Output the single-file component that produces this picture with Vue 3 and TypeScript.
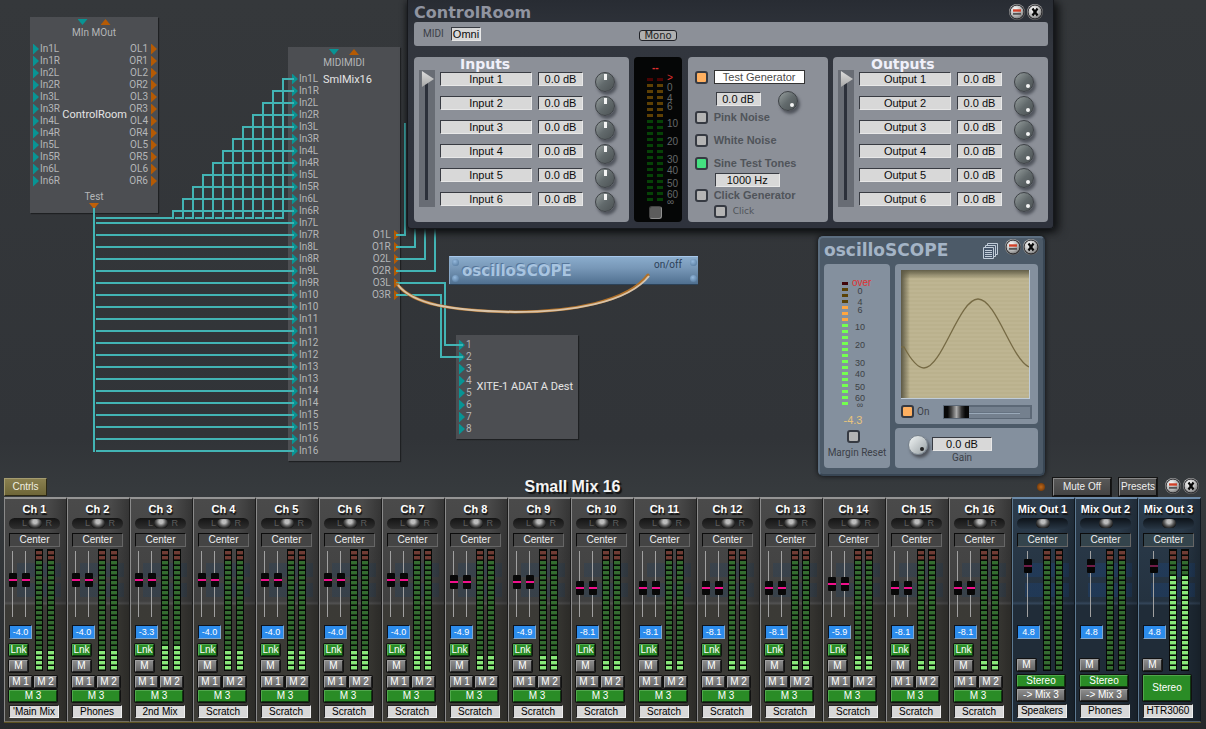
<script setup lang="ts">
import { ref } from 'vue'

interface Strip {
  name: string
  gain: string
  fader: number
  lit: number
  label: string
  kind: 'ch' | 'sub' | 'main'
  spread: boolean
}

const channels: Array<[string, number, number, string]> = [
  ['-4.0', 58, 4, "'Main Mix"], ['-4.0', 58, 4, 'Phones'], ['-3.3', 58, 5, '2nd Mix'], ['-4.0', 58, 4, 'Scratch'],
  ['-4.0', 58, 4, 'Scratch'], ['-4.0', 58, 4, 'Scratch'], ['-4.0', 58, 4, 'Scratch'], ['-4.9', 54, 3, 'Scratch'],
  ['-4.9', 54, 3, 'Scratch'], ['-8.1', 42, 2, 'Scratch'], ['-8.1', 42, 2, 'Scratch'], ['-8.1', 42, 2, 'Scratch'],
  ['-8.1', 42, 2, 'Scratch'], ['-5.9', 50, 3, 'Scratch'], ['-8.1', 42, 2, 'Scratch'], ['-8.1', 42, 2, 'Scratch'],
]

const strips = ref<Strip[]>([
  ...channels.map(([gain, fader, lit, label], i): Strip => ({
    name: `Ch ${i + 1}`, gain, fader, lit, label, kind: 'ch', spread: i < 4,
  })),
  { name: 'Mix Out 1', gain: '4.8', fader: 83, lit: 0, label: 'Speakers', kind: 'sub', spread: true },
  { name: 'Mix Out 2', gain: '4.8', fader: 83, lit: 0, label: 'Phones', kind: 'sub', spread: true },
  { name: 'Mix Out 3', gain: '4.8', fader: 83, lit: 19, label: 'HTR3060', kind: 'main', spread: true },
])

const CELLS = 24
const cellClass = (n: number, lit: number): string =>
  n <= 2 ? 'peak' : n > CELLS - lit ? 'lit' : 'dim'

const pair = (prefix: string, from: number, to: number): string[] => {
  const out: string[] = []
  for (let n = from; n <= to; n++) out.push(`${prefix}${n}L`, `${prefix}${n}R`)
  return out
}
const roomIns = pair('In', 1, 6)
const roomOuts = [1, 2, 3, 4, 5, 6].flatMap((n) => [`OL${n}`, `OR${n}`])
const mixIns = [...pair('In', 1, 9), ...[10, 11, 12, 13, 14, 15, 16].flatMap((n) => [`In${n}`, `In${n}`])]
const mixOuts = pair('O', 1, 3)
const adatIns = ['1', '2', '3', '4', '5', '6', '7', '8']

const fan = Array.from({ length: 12 }, (_, i) => {
  const x = 283 - i * 10
  const y = 79 + i * 12
  return `M294 ${y}H${x}V218H${x - 8}`
})
const straight = Array.from({ length: 20 }, (_, i) => `M96 ${223 + i * 12}H294`)
const wires = [
  'M94 208V452', 'M96 218H165', ...fan, ...straight,
  'M396 235H405V123', 'M396 247H415V225', 'M396 259H425V225', 'M396 271H435V225',
  'M396 283H445V345H463', 'M396 295H441V357H463',
]

const scale: Array<[string, number]> = [
  ['0', 13], ['4', 24], ['6', 32], ['10', 49], ['20', 67], ['30', 85], ['40', 96], ['50', 109], ['60', 120], ['∞', 127],
]
const roomLed = (n: number): string => (n === 0 ? '#4a0404' : n < 7 ? '#5e4004' : '#064206')
const scopeLed = (n: number): string =>
  n === 0 ? '#400408' : n < 4 ? '#5a4206' : n < 7 ? '#ffa640' : '#74ff50'

const inputs = ref([1, 2, 3, 4, 5, 6].map((n) => ({ name: `Input ${n}`, gain: '0.0 dB' })))
const outputs = ref([1, 2, 3, 4, 5, 6].map((n) => ({ name: `Output ${n}`, gain: '0.0 dB' })))
</script>

<template>
  <main class="desk">
    <section class="canvas" aria-label="Routing">
      <article class="node node-room">
        <header class="node-head">
          <span class="tris"><i class="tri down"></i><i class="tri up"></i></span>
          <span>MIn MOut</span>
        </header>
        <div class="node-body">
          <ul class="ports in"><li v-for="p in roomIns" :key="p">{{ p }}</li></ul>
          <h3 class="node-name">ControlRoom</h3>
          <ul class="ports out"><li v-for="p in roomOuts" :key="p">{{ p }}</li></ul>
        </div>
        <footer class="node-foot">Test<i class="tri down hot"></i></footer>
      </article>

      <article class="node node-mix">
        <header class="node-head">
          <span class="tris close"><i class="tri down"></i><i class="tri up"></i></span>
          <span>MIDIMIDI</span>
        </header>
        <div class="node-body">
          <ul class="ports in"><li v-for="(p, i) in mixIns" :key="i">{{ p }}</li></ul>
          <h3 class="node-name top">SmlMix16</h3>
          <ul class="ports out low"><li v-for="p in mixOuts" :key="p">{{ p }}</li></ul>
        </div>
      </article>

      <article class="node node-adat">
        <div class="node-body">
          <ul class="ports in"><li v-for="p in adatIns" :key="p">{{ p }}</li></ul>
          <h3 class="node-name">XITE-1 ADAT A Dest</h3>
        </div>
      </article>

      <article class="banner">
        <span class="screws"><i></i><i></i></span>
        <h3>oscilloSCOPE</h3>
        <span class="onoff">on/off</span>
        <span class="screws"><i></i><i></i></span>
      </article>

      <svg class="wires" aria-hidden="true">
        <path v-for="(d, i) in wires" :key="i" :d="d" class="wire" />
        <path class="cable-edge" d="M397 284C412 304 450 311 515 312C570 312 628 302 648 275" />
        <path class="cable-core" d="M398 285C413 304 450 311 515 312C570 312 628 303 649 276" />
      </svg>

      <section class="window room" aria-label="ControlRoom">
        <header class="titlebar">
          <h2>ControlRoom</h2>
          <span class="winbtns">
            <button type="button" class="round" aria-label="Minimize">
              <svg viewBox="0 0 16 16"><circle cx="8" cy="8" r="7" /><path d="M4 6.500h8" stroke="#d04028" stroke-width="2.400" /><path d="M4 9.800h8" stroke="#555" stroke-width="2" /></svg>
            </button>
            <button type="button" class="round" aria-label="Close">
              <svg viewBox="0 0 16 16"><circle cx="8" cy="8" r="7" /><path d="M5.500 4.500l5 7M10.500 4.500l-5 7" stroke="#080808" stroke-width="2.200" /></svg>
            </button>
          </span>
        </header>
        <div class="midibar">
          <label class="narrow" for="midi">MIDI</label>
          <input id="midi" class="field omni" value="Omni" />
          <button type="button" class="mono">Mono</button>
        </div>
        <div class="panels">
          <section class="panel io">
            <h3>Inputs</h3>
            <div class="io-row">
              <input class="scroller" type="range" min="0" max="100" value="0" aria-label="Scroll inputs" />
              <div class="io-list">
                <div v-for="(r, i) in inputs" :key="i" class="io-line">
                  <input v-model="r.name" class="field name" :aria-label="`Input ${i + 1} name`" />
                  <input v-model="r.gain" class="field db" :aria-label="`Input ${i + 1} gain`" />
                  <label class="knob up"><input type="range" :aria-label="`Input ${i + 1} trim`" /></label>
                </div>
              </div>
            </div>
          </section>

          <section class="panel meter">
            <svg class="meter-svg" viewBox="0 0 48 150" aria-label="Level meter">
              <text x="18" y="14" class="red big">--</text>
              <g v-for="n in 21" :key="n">
                <rect x="13" :y="21 + (n - 1) * 6" width="6" height="3" :fill="roomLed(n - 1)" />
                <rect x="23" :y="21 + (n - 1) * 6" width="6" height="3" :fill="roomLed(n - 1)" />
              </g>
              <text x="33" y="24" class="red">&gt;</text>
              <text v-for="[t, y] in scale" :key="t" x="33" :y="y + 21" class="scale dark">{{ t }}</text>
            </svg>
            <input class="box gray" type="checkbox" aria-label="Reset meter" />
          </section>

          <section class="panel test">
            <div class="trow">
              <input type="checkbox" class="box orange" checked aria-label="Enable test generator" />
              <input class="field white" value="Test Generator" aria-label="Generator name" />
            </div>
            <div class="trow level">
              <input class="field db" value="0.0 dB" aria-label="Generator level" />
              <label class="knob right"><input type="range" aria-label="Generator level knob" /></label>
            </div>
            <div class="trow"><input id="pink" type="checkbox" class="box" /><label for="pink">Pink Noise</label></div>
            <div class="trow g"><input id="white" type="checkbox" class="box" /><label for="white">White Noise</label></div>
            <div class="trow g"><input id="sine" type="checkbox" class="box green" checked /><label for="sine">Sine Test Tones</label></div>
            <input class="field hz" value="1000 Hz" aria-label="Frequency" />
            <div class="trow"><input id="clickgen" type="checkbox" class="box" /><label for="clickgen">Click Generator</label></div>
            <div class="trow click"><input id="click" type="checkbox" class="box" /><label for="click">Click</label></div>
          </section>

          <section class="panel io">
            <h3>Outputs</h3>
            <div class="io-row">
              <input class="scroller" type="range" min="0" max="100" value="0" aria-label="Scroll outputs" />
              <div class="io-list">
                <div v-for="(r, i) in outputs" :key="i" class="io-line">
                  <input v-model="r.name" class="field name" :aria-label="`Output ${i + 1} name`" />
                  <input v-model="r.gain" class="field db" :aria-label="`Output ${i + 1} gain`" />
                  <label class="knob right"><input type="range" :aria-label="`Output ${i + 1} trim`" /></label>
                </div>
              </div>
            </div>
          </section>
        </div>
      </section>

      <section class="window scope" aria-label="oscilloSCOPE">
        <header class="titlebar">
          <h2>oscilloSCOPE</h2>
          <button type="button" class="pages" aria-label="Presets">
            <svg viewBox="0 0 15 16" fill="#46566a" stroke="#c0ccd8"><path d="M4.500.5h10v11h-10z" /><path d="M2.500 2.500h10v11h-10z" /><path d="M.5 4.500h10v11h-10z" /><path d="M2 7.500h7M2 9.500h7M2 11.500h7M2 13.500h7" /></svg>
          </button>
          <span class="winbtns">
            <button type="button" class="round" aria-label="Minimize">
              <svg viewBox="0 0 16 16"><circle cx="8" cy="8" r="7" /><path d="M4 6.500h8" stroke="#d04028" stroke-width="2.400" /><path d="M4 9.800h8" stroke="#555" stroke-width="2" /></svg>
            </button>
            <button type="button" class="round" aria-label="Close">
              <svg viewBox="0 0 16 16"><circle cx="8" cy="8" r="7" /><path d="M5.500 4.500l5 7M10.500 4.500l-5 7" stroke="#080808" stroke-width="2.200" /></svg>
            </button>
          </span>
        </header>
        <div class="scope-body">
          <section class="spanel left">
            <svg class="scope-meter" viewBox="0 0 66 148" aria-label="Level meter">
              <rect v-for="n in 21" :key="n" x="18" :y="4 + (n - 1) * 6" width="6" height="3" :fill="scopeLed(n - 1)" />
              <text x="28" y="8" class="red over">over</text>
              <text v-for="[t, y] in scale" :key="t" x="36" :y="y + 3" text-anchor="middle" class="scale">{{ t }}</text>
              <text x="29" y="146" text-anchor="middle" class="peakval">-4.3</text>
            </svg>
            <input id="margin" type="checkbox" class="box" />
            <label for="margin" class="narrow">Margin Reset</label>
          </section>
          <div class="scope-right">
            <section class="spanel view">
              <svg class="screen" viewBox="0 0 128 128" aria-label="Waveform">
                <path d="M0 77h3C9 88 16 98 23 98C41 98 58 29 77 29C95 29 110 88 128 97" fill="none" stroke="#766a44" stroke-width="1.300" />
              </svg>
              <div class="onrow">
                <input id="on" type="checkbox" class="box orange" checked />
                <label for="on" class="narrow">On</label>
                <input class="hslide" type="range" min="0" max="100" value="0" aria-label="Time base" />
              </div>
            </section>
            <section class="spanel gain">
              <label class="knob light right"><input type="range" aria-label="Gain knob" /></label>
              <div class="gainval">
                <input id="gain" class="field" value="0.0 dB" />
                <label for="gain" class="narrow">Gain</label>
              </div>
            </section>
          </div>
        </div>
      </section>
    </section>

    <section class="mixer" aria-label="Small Mix 16">
      <header class="mixhead">
        <button type="button" class="cntrls">Cntrls</button>
        <h2>Small Mix 16</h2>
        <span class="tools">
          <i class="lamp"></i>
          <button type="button" class="dark mute">Mute Off</button>
          <button type="button" class="dark">Presets</button>
          <span class="winbtns">
            <button type="button" class="round" aria-label="Minimize">
              <svg viewBox="0 0 16 16"><circle cx="8" cy="8" r="7" /><path d="M4 6.500h8" stroke="#d04028" stroke-width="2.400" /><path d="M4 9.800h8" stroke="#555" stroke-width="2" /></svg>
            </button>
            <button type="button" class="round" aria-label="Close">
              <svg viewBox="0 0 16 16"><circle cx="8" cy="8" r="7" /><path d="M5.500 4.500l5 7M10.500 4.500l-5 7" stroke="#080808" stroke-width="2.200" /></svg>
            </button>
          </span>
        </span>
      </header>
      <div class="strips">
        <article v-for="s in strips" :key="s.name" class="strip" :class="[s.kind, { spread: s.spread }]">
          <h3>{{ s.name }}</h3>
          <div class="pan">
            <template v-if="s.kind === 'ch'"><span>L</span><span>R</span></template>
            <input type="range" value="50" :aria-label="`${s.name} pan`" />
          </div>
          <output class="center">Center</output>
          <div class="mid">
            <div class="leftcol">
              <div class="faders">
                <input v-model.number="s.fader" type="range" min="0" max="100" :aria-label="`${s.name} level`" />
                <input v-if="s.kind === 'ch'" v-model.number="s.fader" type="range" min="0" max="100" :aria-label="`${s.name} right level`" />
              </div>
              <input v-model="s.gain" class="gainbox" :aria-label="`${s.name} gain`" />
              <button v-if="s.kind === 'ch'" type="button" class="btn on lnk">Lnk</button>
              <button type="button" class="btn m">M</button>
            </div>
            <div class="bars">
              <div v-for="b in 2" :key="b" class="bar"><i v-for="n in CELLS" :key="n" :class="cellClass(n, s.lit)"></i></div>
            </div>
          </div>
          <div class="bus">
            <template v-if="s.kind === 'ch'">
              <div class="two"><button type="button" class="btn">M 1</button><button type="button" class="btn">M 2</button></div>
              <button type="button" class="btn on">M 3</button>
            </template>
            <template v-else>
              <button type="button" class="btn on stereo">Stereo</button>
              <button v-if="s.kind === 'sub'" type="button" class="btn">-&gt; Mix 3</button>
            </template>
          </div>
          <input v-model="s.label" class="label" :aria-label="`${s.name} label`" />
        </article>
      </div>
    </section>
  </main>
</template>

<style>
html,
body {
  margin: 0;
  background: #26292c;
}
</style>

<style scoped>
.desk,
.desk * {
  box-sizing: border-box;
}
.desk {
  min-height: 100vh;
  display: flex;
  flex-direction: column;
  overflow: hidden;
  background: linear-gradient(#35383b 0, #313438 60%, #363a3d 67%, #26282b 100%);
  font: 11px/14px "Liberation Sans", Arial, sans-serif;
  color: #ddd;
}
h2,
h3,
ul {
  margin: 0;
  padding: 0;
  list-style: none;
}
button,
input {
  margin: 0;
  padding: 0;
  border: 0;
  font: inherit;
  color: inherit;
  min-width: 0;
}
input[type="range"],
input[type="checkbox"] {
  appearance: none;
  background: none;
}
.canvas {
  position: relative;
  flex: 1 0 474px;
}

/* modules */
.node {
  position: absolute;
  background: #4c4e52;
  box-shadow: 1px 1px 1px #1e2022;
  font: 10px/12px Roboto, "Liberation Sans", sans-serif;
  color: #b4b6b8;
}
.node-room { left: 30px; top: 17px; width: 128px; height: 196px; }
.node-mix { left: 288px; top: 47px; width: 112px; height: 414px; }
.node-adat { left: 456px; top: 335px; width: 122px; height: 104px; padding-top: 4px; }
.node-head {
  display: flex;
  flex-direction: column;
  align-items: center;
  height: 26px;
  padding-top: 2px;
  gap: 2px;
}
.tris { display: flex; gap: 13px; }
.tris.close { gap: 10px; }
.tri { width: 10px; height: 6px; }
.tri.up { clip-path: polygon(50% 0, 100% 100%, 0 100%); background: #b45a04; }
.tri.down { clip-path: polygon(0 0, 100% 0, 50% 100%); background: #089494; }
.tri.hot { background: #c06008; }
.node-body { display: flex; }
.ports li { display: flex; align-items: center; height: 12px; }
.ports.in { padding-left: 3px; }
.ports.out { padding-right: 1px; }
.ports.in li::before,
.ports.out li::after {
  content: "";
  width: 6px;
  height: 11px;
  background: #089494;
  clip-path: polygon(0 0, 100% 50%, 0 100%);
}
.ports.in li::before { margin-right: 1px; }
.ports.out li { justify-content: flex-end; }
.ports.out li::after { background: #b45a04; margin-left: 3px; }
.ports.low { padding-top: 156px; }
.node-mix .ports.in { padding-left: 4px; }
.node-name {
  flex: 1;
  align-self: center;
  text-align: center;
  font: 11px/14px Roboto, "Liberation Sans", sans-serif;
  color: #e4e4e4;
  white-space: nowrap;
}
.node-name.top { align-self: flex-start; text-align: left; padding-left: 4px; }
.node-foot {
  display: flex;
  flex-direction: column;
  align-items: center;
  padding-top: 4px;
}
.wires {
  position: absolute;
  inset: 0;
  width: 100%;
  height: 100%;
  pointer-events: none;
}
.wire { fill: none; stroke: #42b4b4; stroke-width: 2; }
.cable-edge { fill: none; stroke: #b07028; stroke-width: 3; stroke-linecap: round; }
.cable-core { fill: none; stroke: #e4d8c8; stroke-width: 2; opacity: 0.8; }

.banner {
  position: absolute;
  left: 449px;
  top: 256px;
  width: 249px;
  height: 28px;
  display: flex;
  background: linear-gradient(#8aaccc, #7898b8 40%, #507090);
  border-top: 1px solid #a8c8ec;
  border-left: 1px solid #88a8c8;
  box-shadow: 0 1px 0 #2c4258;
}
.banner h3 {
  flex: 1;
  padding-left: 2px;
  font: 700 15px/28px "DejaVu Sans", sans-serif;
  color: #a8c4e0;
  text-shadow: -1px -1px 0 #56769a;
}
.onoff { padding-right: 6px; color: #2c4058; font: 10px/15px Roboto, "Liberation Sans", sans-serif; }
.screws { width: 10px; display: flex; flex-direction: column; justify-content: space-between; align-items: center; padding: 2px 0; }
.screws i { width: 7px; height: 7px; border-radius: 50%; background: radial-gradient(circle at 40% 35%, #94b8dc, #4c7094); }

/* windows */
.window { position: absolute; display: flex; flex-direction: column; }
.titlebar { display: flex; align-items: flex-start; }
.titlebar h2 { flex: 1; font: 700 16px/20px "DejaVu Sans", Verdana, sans-serif; color: #9094a0; }
.winbtns { display: flex; gap: 2px; }
.round {
  width: 16px;
  height: 16px;
  border-radius: 50%;
  background: radial-gradient(circle at 40% 35%, #f0f0f0 10%, #b4b4b4 45%, #5c5c5c 80%);
}
.round svg { display: block; fill: none; }
.round circle { stroke: #1c1c20; stroke-width: 1; }
.room {
  left: 407px;
  top: 0;
  width: 647px;
  padding: 3px 5px 6px 6px;
  background: linear-gradient(#282c33, #32363e 20%, #2e323c);
  border: 1px solid #16181c;
  border-top: 0;
  border-radius: 0 0 4px 4px;
  box-shadow: 0 2px 7px #0c0e10, 6px 3px 8px #1c1e20;
}
.room .titlebar { height: 19px; }
.room .titlebar .winbtns { padding: 1px 5px 0 0; }
.midibar {
  display: flex;
  align-items: center;
  height: 24px;
  padding: 0 9px 1px 9px;
  background: #8c9098;
  border-radius: 3px;
}
.narrow { font: 10px/14px Roboto, "Liberation Sans", sans-serif; color: #3c4048; white-space: nowrap; }
.midibar .narrow { width: 28px; }
.field {
  height: 14px;
  background: #d8d8d8;
  border: 1px solid #e8e8e8;
  border-top-color: #383b42;
  border-left-color: #383b42;
  text-align: center;
  font: 11px/12px "Liberation Sans", Arial, sans-serif;
  color: #0c0c0c;
}
.omni { width: 30px; }
.mono {
  margin: 3px 0 0 158px;
  width: 38px;
  height: 11px;
  background: #b0b0b0;
  border: 1px solid #202228;
  border-radius: 3px;
  font: 10px/9px "DejaVu Sans", sans-serif;
  color: #222;
}
.panels { display: grid; grid-template-columns: 215px 48px 140px 215px; justify-content: space-between; margin-top: 11px; }
.panel { height: 165px; background: #8c9098; border-radius: 4px; }
.io { padding: 0 5px; }
.io h3 { font: 700 14px/14px "DejaVu Sans", Verdana, sans-serif; color: #f0f0fa; padding-left: 41px; height: 13px; }
.test + .io h3 { padding-left: 33px; }
.io-row { display: flex; gap: 5px; }
.io-row .scroller {
  writing-mode: vertical-lr;
  width: 16px;
  height: 137px;
  background: linear-gradient(#2c303a, #2c303a) 6px 12px / 3px 118px no-repeat, #686c74;
}
.scroller::-webkit-slider-thumb {
  appearance: none;
  width: 14px;
  height: 18px;
  background: linear-gradient(#e0e0e0, #a4a4a4);
  clip-path: polygon(14% 6%, 100% 50%, 14% 94%);
}
.io-list { display: flex; flex-direction: column; gap: 10px; padding-top: 2px; }
.io-line { display: flex; height: 14px; }
.name { width: 92px; margin-right: 6px; }
.db { width: 45px; }
.io-line .knob { margin-left: 12px; }
.knob {
  position: relative;
  width: 20px;
  height: 20px;
  border-radius: 50%;
  background: linear-gradient(135deg, #8c9494 10%, #626a6c 50%, #4c5254);
  border: 1px solid #3e4246;
  box-shadow: 2px 3px 3px #50545c;
  flex: none;
}
.knob::after {
  content: "";
  position: absolute;
  left: 8px;
  top: 1px;
  width: 3px;
  height: 6px;
  background: #f4f4f4;
}
.knob.right::after { left: 11px; top: 11px; width: 4px; height: 4px; border-radius: 2px; }
.knob.light { background: linear-gradient(135deg, #f0f4f4, #98a0a4); border-color: #78828c; }
.knob.light::after { background: #222; }
.knob input { position: absolute; inset: 0; width: 100%; height: 100%; opacity: 0; }

.meter { background: #050606; display: flex; flex-direction: column; align-items: center; }
.meter-svg { width: 48px; height: 150px; flex: none; }
.red { fill: #e03030; font: 10px "Liberation Sans", sans-serif; }
.big { font-weight: 700; }
.scale { font: 9px "Liberation Sans", sans-serif; fill: #3c4044; }
.scale.dark { fill: #64686a; }

.box {
  flex: none;
  width: 13px;
  height: 13px;
  border: 2px solid #363a42;
  border-radius: 3px;
}
input[type="checkbox"].box { background: #b4b4b4; }
input[type="checkbox"].orange { background: #ffb060; }
input[type="checkbox"].green { background: #44e080; }
input[type="checkbox"].gray { background: #5c5c5c; border: 1px solid #888; border-color: #444 #909090 #909090 #444; align-self: flex-start; margin-left: 15px; margin-top: -1px; }
.test { padding: 13px 6px 0 7px; display: flex; flex-direction: column; }
.trow { display: flex; align-items: center; gap: 6px; height: 14px; font-weight: 700; color: #50545a; }
.trow.g { margin-top: 9px; }
.trow.level { height: 20px; padding-left: 21px; margin: 5px 0 1px; gap: 17px; }
.trow.level .knob { margin-top: 4px; }
.white { flex: none; width: 91px; background: #fff; border-color: #333; color: #4a4a4a; }
.hz { flex: none; width: 65px; margin: 3px 0 1px 20px; }
.trow.click { margin-top: 2px; padding-left: 19px; font: 9px/12px "DejaVu Sans", sans-serif; }

.scope {
  left: 818px;
  top: 236px;
  width: 227px;
  height: 240px;
  padding: 0 4px;
  background: #4c5a68;
  border: 2px solid #5c6e80;
  border-color: #5c6e80 #384654 #384654 #5c6e80;
  border-radius: 5px;
  box-shadow: 0 0 5px #0c0e10;
}
.scope .titlebar { height: 26px; }
.scope .titlebar h2 { font-size: 17px; line-height: 24px; color: #a4b4c6; }
.scope .winbtns { padding: 1px 0 0 7px; }
.pages { width: 15px; height: 16px; margin-top: 5px; background: none; }
.pages svg { display: block; }
.scope-body { display: grid; grid-template-columns: 66px 143px; gap: 5px; }
.spanel { background: #84909e; border-radius: 4px; }
.spanel.left { display: flex; flex-direction: column; align-items: center; padding-top: 14px; }
.spanel.left .box { margin: 4px 7px 3px 0; }
.scope-meter { width: 66px; height: 148px; }
.over { font-size: 10px; }
.peakval { fill: #e8c47c; font: 11px "Liberation Sans", sans-serif; }
.scope-right { display: flex; flex-direction: column; gap: 4px; }
.view { height: 160px; padding: 6px; }
.screen {
  display: block;
  width: 129px;
  height: 129px;
  background: linear-gradient(90deg, #5c5844, transparent 7%), linear-gradient(#625e48, transparent 7%),
    repeating-linear-gradient(#beb592 0 2px, #bab18d 2px 4px);
  border-right: 1px solid #c0ccd8;
  border-bottom: 1px solid #c0ccd8;
}
.onrow { display: flex; align-items: center; gap: 3px; height: 25px; }
.hslide { width: 89px; height: 14px; margin-left: auto; border: 1px solid #5c6876; border-width: 2px 2px 1px 1px; }
.view .hslide { background: linear-gradient(#4c5866, #b4c4d4) 0 5px / 76px 2px no-repeat, #74808e; }
.hslide::-webkit-slider-thumb {
  appearance: none;
  width: 25px;
  height: 12px;
  background: linear-gradient(90deg, #080808 15%, #444 30%, #aaa 50%, #333 70%, #080808 85%);
}
.gain { height: 40px; display: flex; align-items: flex-start; padding: 7px 13px; gap: 4px; }
.gainval { display: flex; flex-direction: column; align-items: center; }
.gainval .field { width: 60px; margin-top: 2px; }

/* mixer */
.mixer { padding: 0 5px 7px 4px; }
.mixhead { display: grid; grid-template-columns: 1fr auto 1fr; align-items: center; height: 23px; padding-top: 2px; }
.mixhead h2 { font: 700 16px/20px "Liberation Sans", Arial, sans-serif; color: #f4f4f4; margin-right: 60px; text-shadow: 2px 2px 1px #111; }
.cntrls {
  justify-self: start;
  width: 43px;
  height: 18px;
  background: linear-gradient(#8a8050, #6e6638);
  border: 1px solid #a09868;
  border-color: #a49c70 #2c2814 #2c2814 #a49c70;
  color: #f2f0e0;
  font-size: 10px;
}
.tools { justify-self: end; display: flex; align-items: center; gap: 8px; }
.lamp { width: 8px; height: 8px; border-radius: 50%; background: radial-gradient(#c06818, #582c08); }
.tools .winbtns { padding: 0 2px 2px 0; }
.dark {
  width: 38px;
  height: 18px;
  background: linear-gradient(#585858, #444);
  border: 1px solid #888;
  border-color: #888 #111 #111 #888;
  box-shadow: 0 0 0 1px #161616;
  color: #eee;
  font-size: 10px;
  white-space: nowrap;
}
.mute { width: 58px; }
.strips { display: grid; grid-template-columns: repeat(19, minmax(0, 1fr)); border-bottom: 1px solid #5c5220; }
.strip {
  display: flex;
  flex-direction: column;
  height: 225px;
  padding: 3px 6px 3px 4px;
  border: 1px solid #787878;
  border-width: 2px 1px 1px 1px;
  border-color: #949494 #1c1c1c #706c60 #8a8a8a;
  background: linear-gradient(90deg, #0000 70%, #0004 100%),
    linear-gradient(#24405c50, #24405c50) 12px 64px / 44px 14px no-repeat,
    linear-gradient(#24405c50, #24405c50) 12px 84px / 44px 14px no-repeat,
    linear-gradient(#4a4a4a, #404040 46%, #525252 47%, #3b3a36 48%, #3c3b36);
}
.strip.sub,
.strip.main {
  border-color: #6c8aa8 #101820 #4c5c6c #5c7890;
  background: linear-gradient(90deg, #0000 70%, #0004 100%),
    linear-gradient(#1c407070, #1c407070) 12px 64px / 44px 14px no-repeat,
    linear-gradient(#1c407070, #1c407070) 12px 84px / 44px 14px no-repeat,
    linear-gradient(#2c3c4c, #243240 46%, #34465a 47%, #202c38 48%, #202c38);
}
.strip h3 {
  height: 14px;
  margin: 0 -4px 2px;
  text-align: center;
  font: 700 11px/14px "Liberation Sans", Arial, sans-serif;
  color: #fff;
  text-shadow: 1px 2px 1px #111;
  white-space: nowrap;
}
.pan {
  position: relative;
  display: flex;
  justify-content: space-between;
  height: 11px;
  padding: 0 8px 0 13px;
  border-radius: 6px;
  background: linear-gradient(#141414, #303030);
  font: 9px/11px "Liberation Sans", sans-serif;
  color: #5c5c5c;
}
.sub .pan,
.main .pan { background: linear-gradient(#0c1218, #283644); }
.pan input { position: absolute; inset: 0; width: 100%; height: 11px; }
.pan input::-webkit-slider-thumb {
  appearance: none;
  width: 14px;
  height: 9px;
  border-radius: 5px;
  background: radial-gradient(ellipse at 50% 30%, #bcbcbc 20%, #585858 50%, #111 80%);
}
.center {
  margin-top: 4px;
  height: 14px;
  border: 1px solid #666;
  border-color: #0c0c0c #666 #666 #0c0c0c;
  background: #444;
  text-align: center;
  font-size: 10px;
  line-height: 12px;
  color: #f0f0f0;
}
.sub .center,
.main .center { background: #34444c; }
.mid { display: flex; height: 125px; padding-top: 2px; }
.leftcol { width: 26px; flex: none; display: flex; flex-direction: column; align-items: flex-start; }
.faders { display: flex; gap: 5px; height: 76px; padding-top: 2px; }
.sub .faders,
.main .faders { padding-left: 7px; }
.faders input {
  writing-mode: vertical-lr;
  direction: rtl;
  width: 8px;
  height: 66px;
}
.leftcol .faders input { background: linear-gradient(#a0a0a0, #a0a0a0) 3px 0 / 1px 100% no-repeat; }
.faders input::-webkit-slider-thumb {
  appearance: none;
  width: 8px;
  height: 14px;
  border-radius: 1px;
  background: linear-gradient(#f0108c, #f0108c) 0 6px / 8px 2px no-repeat, #080808;
}
.sub .faders input::-webkit-slider-thumb,
.main .faders input::-webkit-slider-thumb {
  background: linear-gradient(#701c48, #701c48) 0 6px / 8px 2px no-repeat, #060606;
}
.gainbox {
  width: 23px;
  height: 14px;
  background: #2c8cec;
  border: 1px solid #88b4e0;
  border-color: #0c1420 #80a8d0 #80a8d0 #0c1420;
  text-align: center;
  font: 9px/12px "Liberation Sans", sans-serif;
  color: #fff;
}
.btn {
  height: 12px;
  background: linear-gradient(#8c8c8c, #646464);
  border: 1px solid #a8a8a8;
  border-color: #a0a0a0 #222 #222 #a0a0a0;
  border-radius: 1px;
  box-shadow: 0 0 0 1px #111;
  font: 10px/10px "Liberation Sans", sans-serif;
  color: #fff;
  white-space: nowrap;
}
.btn.on { background: #2a8c26; border-color: #50a84c #103810 #103810 #50a84c; }
.leftcol .btn { width: 19px; }
.lnk { margin: 5px 0 0; }
.leftcol .m { margin-top: auto; }
.leftcol .lnk + .m { margin-top: 4px; }
.bars { display: flex; gap: 3px; }
.spread .bars { gap: 4px; }
.bar { width: 8px; height: 122px; padding: 2px 1px 0; background: #060806; display: flex; flex-direction: column; gap: 1px; }
.bar i { height: 4px; border-bottom: 1px solid #0008; }
.peak { background: #703c34; }
.dim { background: #346c30; }
.lit { background: #88e878; }
.bus { display: flex; flex-direction: column; gap: 2px; height: 27px; margin-top: 4px; padding-right: 3px; }
.two { display: grid; grid-template-columns: 1fr 1fr; gap: 2px; }
.stereo { flex: 1; }
.label {
  width: 50px;
  height: 15px;
  margin-top: 3px;
  background: #d8d8d8;
  border: 1px solid #eee;
  border-color: #222 #eee #eee #222;
  text-align: center;
  font: 10px/12px "Liberation Sans", sans-serif;
  color: #000;
}
</style>
